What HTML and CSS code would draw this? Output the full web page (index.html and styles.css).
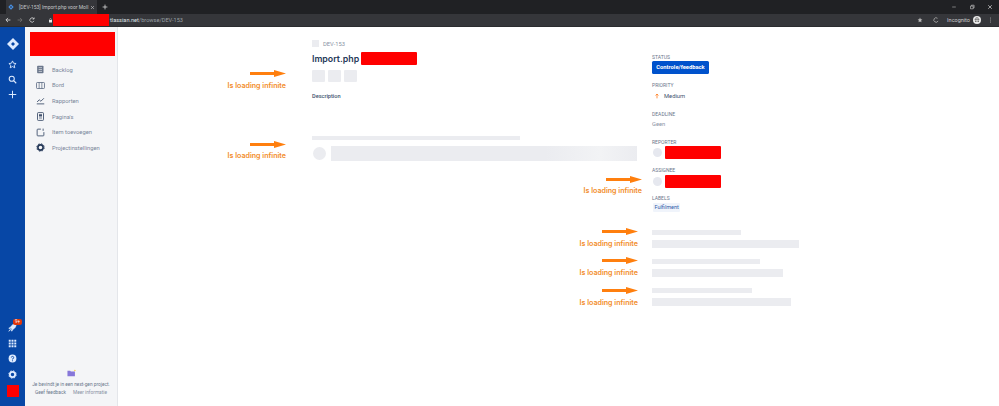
FILE: index.html
```html
<!DOCTYPE html>
<html lang="en">
<head>
  <meta charset="UTF-8" />
  <title>[DEV-153] Import.php</title>
  <link rel="stylesheet" href="styles.css">
</head>
<body>

  <!-- browser chrome -->
  <div class="tabstrip">
    <div class="tab">
      <svg class="tab-icon" viewBox="0 0 10 10"><path d="M5 0.5 9.5 5 5 9.5 0.5 5Z" fill="#4a90e2"/><path d="M5 3.5 6.5 5 5 6.5 3.5 5Z" fill="#202124"/></svg>
      <span class="tab-title">[DEV-153] Import.php voor Moll</span>
      <svg class="tab-close" viewBox="0 0 10 10"><path d="M2 2 8 8M8 2 2 8" stroke="#c8c8c8" stroke-width="1.2"/></svg>
    </div>
    <svg class="new-tab" viewBox="0 0 10 10"><path d="M5 1V9M1 5H9" stroke="#e8e8e8" stroke-width="1.2"/></svg>
    <div class="win-btns">
      <svg viewBox="0 0 10 10"><path d="M2 5H8" stroke="#bbb"/></svg>
      <svg viewBox="0 0 10 10"><path d="M2.5 3.5H7V8H2.5ZM4 3.5V2H8.5V6.5H7" fill="none" stroke="#ccc"/></svg>
      <svg viewBox="0 0 10 10"><path d="M2 2 8 8M8 2 2 8" stroke="#ddd" stroke-width="1.1"/></svg>
    </div>
  </div>
  <div class="toolbar">
    <svg class="tool" viewBox="0 0 10 10"><path d="M9 5H2M5 1.5 1.5 5 5 8.5" fill="none" stroke="#e8e8e8" stroke-width="1.3"/></svg>
    <svg class="tool" viewBox="0 0 10 10"><path d="M1 5H8M5 1.5 8.5 5 5 8.5" fill="none" stroke="#777" stroke-width="1.3"/></svg>
    <svg class="tool" viewBox="0 0 10 10"><path d="M8.3 6.5A3.6 3.6 0 1 1 8 3M8.5 0.8V3.4H5.9" fill="none" stroke="#e8e8e8" stroke-width="1.2"/></svg>
    <svg class="lock" viewBox="0 0 10 10"><rect x="2" y="4" width="6" height="5" fill="#e8e8e8"/><path d="M3.3 4V2.8A1.7 1.7 0 0 1 6.7 2.8V4" fill="none" stroke="#e8e8e8"/></svg>
    <div class="url-block"></div>
    <span class="url"><b>tlassian.net</b>/browse/DEV-153</span>
    <div class="tool-right">
      <svg class="tool" viewBox="0 0 10 10"><path d="M5 1 6.2 3.7 9 4 6.900 5.900 7.500 8.800 5 7.300 2.500 8.800 3.100 5.900 1 4 3.800 3.700Z" fill="#bbb"/></svg>
      <svg class="tool tool-ext" viewBox="0 0 10 10"><path d="M8.500 6.500A3.700 3.700 0 1 1 7.500 2.200" fill="none" stroke="#aaa" stroke-width="1.400"/></svg>
      <span class="incognito">Incognito</span>
      <svg class="avatar" viewBox="0 0 10 10"><circle cx="5" cy="5" r="5" fill="#e8e8e8"/><path d="M2 4.500H8M3.200 4.500 3.700 2.300H6.300L6.800 4.500" fill="none" stroke="#555" stroke-width=".8"/><circle cx="3.500" cy="6.500" r="1" fill="#555"/><circle cx="6.500" cy="6.500" r="1" fill="#555"/></svg>
      <svg class="dots" viewBox="0 0 4 10"><circle cx="2" cy="1.500" r=".8" fill="#ddd"/><circle cx="2" cy="5" r=".8" fill="#ddd"/><circle cx="2" cy="8.500" r=".8" fill="#ddd"/></svg>
    </div>
  </div>

  <div class="app">
    <!-- global nav -->
    <div class="rail">
      <div class="rail-top">
        <svg class="rail-logo" viewBox="0 0 12 12"><path d="M6 0 12 6 6 12 0 6Z" fill="#deebff"/><path d="M6 4 8 6 6 8 4 6Z" fill="#0747a6"/></svg>
        <svg class="rail-icon" viewBox="0 0 12 12"><path d="M6 1.200 7.400 4.300 10.800 4.700 8.300 7 9 10.400 6 8.700 3 10.400 3.700 7 1.200 4.700 4.600 4.300Z" fill="none" stroke="#deebff" stroke-width="1.200"/></svg>
        <svg class="rail-icon" viewBox="0 0 12 12"><circle cx="5" cy="5" r="3.400" fill="none" stroke="#deebff" stroke-width="1.400"/><path d="M7.500 7.500 11 11" stroke="#deebff" stroke-width="1.500"/></svg>
        <svg class="rail-icon" viewBox="0 0 12 12"><path d="M6 1V11M1 6H11" stroke="#deebff" stroke-width="1.300"/></svg>
      </div>
      <div class="rail-bottom">
        <div class="rocket">
          <svg class="rail-icon" viewBox="0 0 12 12"><path d="M11 1C7 1 4.500 3 3.300 6L6 8.700C9 7.500 11 5 11 1ZM3.300 5.500 1 7 3 8ZM6.500 8.700 5 11 4 9ZM3 8.500 1 11 3.500 9Z" fill="#deebff" stroke="#deebff" stroke-width=".8"/></svg>
          <span class="badge">9+</span>
        </div>
        <svg class="rail-icon" viewBox="0 0 12 12"><g fill="#deebff"><rect x="1" y="1" width="2.600" height="2.600"/><rect x="4.700" y="1" width="2.600" height="2.600"/><rect x="8.400" y="1" width="2.600" height="2.600"/><rect x="1" y="4.700" width="2.600" height="2.600"/><rect x="4.700" y="4.700" width="2.600" height="2.600"/><rect x="8.400" y="4.700" width="2.600" height="2.600"/><rect x="1" y="8.400" width="2.600" height="2.600"/><rect x="4.700" y="8.400" width="2.600" height="2.600"/><rect x="8.400" y="8.400" width="2.600" height="2.600"/></g></svg>
        <svg class="rail-icon" viewBox="0 0 12 12"><circle cx="6" cy="6" r="5.200" fill="#deebff"/><path d="M4.400 4.700A1.600 1.600 0 1 1 6 6.400V7.200" fill="none" stroke="#0747a6" stroke-width="1.200"/><circle cx="6" cy="9" r=".8" fill="#0747a6"/></svg>
        <svg class="rail-icon" viewBox="0 0 12 12"><circle cx="6" cy="6" r="3.500" fill="none" stroke="#deebff" stroke-width="2.400"/><circle cx="6" cy="6" r="5" fill="none" stroke="#deebff" stroke-width="1.200" stroke-dasharray="2 1.930"/></svg>
        <div class="rail-user"></div>
      </div>
    </div>

    <!-- project sidebar -->
    <div class="sidebar">
      <div class="project-block"></div>
      <ul class="side-nav">
        <li>
          <svg viewBox="0 0 12 12"><rect x="1.500" y="1" width="8.500" height="10" rx="1" fill="#6b778c"/><path d="M3.500 3.500H8M3.500 6H8M3.500 8.500H8" stroke="#f4f5f7" stroke-width=".8"/></svg>
          Backlog
        </li>
        <li>
          <svg viewBox="0 0 12 12"><rect x=".700" y="2" width="10.600" height="8" rx="1" fill="none" stroke="#5e6c84" stroke-width="1.100"/><path d="M4.200 2V10M7.800 2V10" stroke="#5e6c84"/></svg>
          Bord
        </li>
        <li>
          <svg viewBox="0 0 12 12"><path d="M1 10.500H11M1.500 8 4.300 5 6.500 7 10.500 3" fill="none" stroke="#42526e" stroke-width="1.200"/></svg>
          Rapporten
        </li>
        <li>
          <svg viewBox="0 0 12 12"><rect x="2" y=".800" width="8" height="10.400" rx="1" fill="none" stroke="#42526e" stroke-width="1.200"/><rect x="4" y="3" width="4" height="3" fill="#42526e"/><path d="M4 8H8" stroke="#42526e"/></svg>
          Pagina's
        </li>
        <li>
          <svg viewBox="0 0 12 12"><path d="M6.500 1.500H2.500A1 1 0 0 0 1.500 2.500V9.500A1 1 0 0 0 2.500 10.500H9.500A1 1 0 0 0 10.500 9.500V5.500" fill="none" stroke="#42526e" stroke-width="1.200"/><path d="M9.500 0.800V3.800" stroke="#42526e" stroke-width="1.200"/></svg>
          Item toevoegen
        </li>
        <li>
          <svg viewBox="0 0 12 12"><circle cx="6" cy="6" r="3.500" fill="none" stroke="#253858" stroke-width="2.200"/><circle cx="6" cy="6" r="5" fill="none" stroke="#253858" stroke-width="1.200" stroke-dasharray="2 1.930"/></svg>
          Projectinstellingen
        </li>
      </ul>
      <div class="side-foot">
        <svg class="folder" viewBox="0 0 10 8"><path d="M0.500 1.500H3.500L4.300 2.300H8.800V7.500H.500Z" fill="#8777d9"/><path d="M8.800 0 9.200 .9 10 1.200 9.200 1.500 8.800 2.400 8.400 1.500 7.600 1.200 8.400 .9Z" fill="#ffc400"/></svg>
        <p class="foot-text">Je bevindt je in een next-gen project.</p>
        <div class="foot-links">
          <span class="foot-dark">Geef feedback</span>
          <span>Meer informatie</span>
        </div>
      </div>
    </div>

    <!-- issue -->
    <div class="content">
      <div class="issue">
        <div class="crumb"><span class="crumb-box"></span>DEV-153</div>
        <div class="title-row">
          <h1>Import.php</h1>
          <div class="title-block"></div>
        </div>
        <div class="squares"><span></span><span></span><span></span></div>
        <h4 class="desc">Description</h4>
        <div class="skel skel-desc"></div>
        <div class="comment-row">
          <span class="skel-circle"></span>
          <div class="skel skel-comment"></div>
        </div>
      </div>

      <div class="side-panel">
        <div class="field field-status">
          <div class="label">STATUS</div>
          <div class="status-btn">Controle/feedback</div>
        </div>
        <div class="field field-priority">
          <div class="label">PRIORITY</div>
          <div class="value">
            <svg class="prio" viewBox="0 0 6 8"><path d="M3 7.500V1M.8 3.200 3 1 5.200 3.200" fill="none" stroke="#ff7a1a" stroke-width="1.200"/></svg>
            Medium
          </div>
        </div>
        <div class="field field-deadline">
          <div class="label">DEADLINE</div>
          <div class="value muted">Geen</div>
        </div>
        <div class="field field-person">
          <div class="label">REPORTER</div>
          <div class="person"><span class="person-pic"></span><div class="person-block"></div></div>
        </div>
        <div class="field field-person">
          <div class="label">ASSIGNEE</div>
          <div class="person"><span class="person-pic"></span><div class="person-block"></div></div>
        </div>
        <div class="field field-labels">
          <div class="label">LABELS</div>
          <div class="tag">Fulfilment</div>
        </div>
        <div class="skel-group">
          <div class="skel skel-short w1"></div>
          <div class="skel skel-long w2"></div>
        </div>
        <div class="skel-group">
          <div class="skel skel-short w3"></div>
          <div class="skel skel-long w4"></div>
        </div>
        <div class="skel-group">
          <div class="skel skel-short w5"></div>
          <div class="skel skel-long w6"></div>
        </div>
      </div>
    </div>
  </div>

  <!-- orange notes drawn over the screenshot -->
  <div class="note note-1"><svg viewBox="0 0 36 7"><path d="M0 2H24V0L36 3.500 24 7V5H0Z"/></svg><span>Is loading infinite</span></div>
  <div class="note note-2"><svg viewBox="0 0 36 7"><path d="M0 2H24V0L36 3.500 24 7V5H0Z"/></svg><span>Is loading infinite</span></div>
  <div class="note note-3"><svg viewBox="0 0 36 7"><path d="M0 2H24V0L36 3.500 24 7V5H0Z"/></svg><span>Is loading infinite</span></div>
  <div class="note note-4"><svg viewBox="0 0 36 7"><path d="M0 2H24V0L36 3.500 24 7V5H0Z"/></svg><span>Is loading infinite</span></div>
  <div class="note note-5"><svg viewBox="0 0 36 7"><path d="M0 2H24V0L36 3.500 24 7V5H0Z"/></svg><span>Is loading infinite</span></div>
  <div class="note note-6"><svg viewBox="0 0 36 7"><path d="M0 2H24V0L36 3.500 24 7V5H0Z"/></svg><span>Is loading infinite</span></div>

</body>
</html>
```

FILE: styles.css
```css
* {
  box-sizing: border-box;
}

html, body {
  margin: 0;
  padding: 0;
  height: 406px;
  overflow: hidden;
}

body {
  font-family: Roboto, "Liberation Sans", sans-serif;
  background: #fff;
  color: #42526e;
  position: relative;
  display: flex;
  flex-direction: column;
}

/* browser chrome */
.tabstrip {
  height: 14px;
  background: #202124;
  display: flex;
  align-items: center;
  padding-left: 6px;
  flex-shrink: 0;
}

.tab {
  width: 91px;
  height: 14px;
  background: #35363a;
  display: flex;
  align-items: center;
  padding-left: 2px;
  color: #c4c6c9;
  font-size: 5px;
  white-space: nowrap;
}

.tab-icon {
  width: 6px;
  height: 6px;
  margin-right: 5px;
  flex-shrink: 0;
}

.tab-title {
  width: 68px;
}

.tab-close {
  width: 5px;
  height: 5px;
  margin-left: 3px;
}

.new-tab {
  width: 6px;
  height: 6px;
  margin-left: 5px;
}

.win-btns {
  margin-left: auto;
  display: flex;
  gap: 12px;
  padding-right: 6px;
}

.win-btns svg {
  width: 6px;
  height: 6px;
}

.toolbar {
  height: 13px;
  background: #35363a;
  display: flex;
  align-items: center;
  padding-left: 5px;
  flex-shrink: 0;
  border-bottom: 1px solid #2b2c2f;
}

.tool {
  width: 6px;
  height: 6px;
  margin-right: 6px;
}

.lock {
  width: 5px;
  height: 5px;
  margin-left: 7px;
}

.url-block {
  width: 56px;
  height: 12px;
  background: #ff0000;
  margin-left: 0;
}

.url {
  font-size: 5.6px;
  color: #9aa0a6;
  margin-left: 1px;
}

.url b {
  font-weight: 400;
  color: #dfe1e5;
}

.tool-right {
  margin-left: auto;
  display: flex;
  align-items: center;
  padding-right: 7px;
}

.tool-right .tool {
  margin-right: 10px;
}

.tool-right .tool-ext {
  margin-right: 8px;
}

.incognito {
  color: #c9cbce;
  font-size: 5.5px;
  margin-right: 3px;
}

.avatar {
  width: 8px;
  height: 8px;
  margin-right: 8px;
}

.dots {
  width: 3px;
  height: 6px;
}

/* app frame */
.app {
  flex: 1;
  display: flex;
  min-height: 0;
}

.rail {
  width: 25px;
  background: #0747a6;
  display: flex;
  flex-direction: column;
  justify-content: space-between;
  align-items: center;
  padding: 11px 0 9px;
  flex-shrink: 0;
}

.rail-top,
.rail-bottom {
  display: flex;
  flex-direction: column;
  align-items: center;
}

.rail-logo {
  width: 12px;
  height: 12px;
  margin-bottom: 9.5px;
  display: block;
}

.rail-icon {
  width: 9px;
  height: 9px;
  display: block;
}

.rail-top .rail-icon {
  margin-bottom: 6.2px;
}

.rail-bottom .rail-icon {
  margin-bottom: 6.5px;
}

.rocket {
  position: relative;
}

.badge {
  position: absolute;
  left: 5px;
  top: -4px;
  width: 9px;
  height: 6px;
  background: #de350b;
  color: #fff;
  border-radius: 2px;
  font-size: 4.5px;
  line-height: 6px;
  text-align: center;
}

.rail-user {
  width: 12px;
  height: 12px;
  background: #ff0000;
  margin-top: 0;
}

.sidebar {
  width: 93px;
  background: #f4f5f7;
  border-right: 1px solid #e4e6ea;
  display: flex;
  flex-direction: column;
  flex-shrink: 0;
}

.project-block {
  width: 85px;
  height: 24px;
  background: #ff0000;
  margin: 5px 0 0 5px;
}

.side-nav {
  list-style-type: none;
  margin: 6px 0 0;
  padding: 0 0 0 11px;
}

.side-nav li {
  height: 15.6px;
  display: flex;
  align-items: center;
  font-size: 5.8px;
  color: #7a869a;
  white-space: nowrap;
}

.side-nav svg {
  width: 9px;
  height: 9px;
  margin-right: 7px;
}

.side-foot {
  margin-top: auto;
  text-align: center;
  font-size: 4.8px;
  color: #8993a4;
  padding-bottom: 10px;
}

.folder {
  width: 9px;
  height: 8px;
  display: block;
  margin: 0 auto 4px;
}

.foot-text {
  margin: 0 0 1.5px;
  line-height: 7px;
  white-space: nowrap;
  color: #6b778c;
}

.foot-links {
  display: flex;
  justify-content: space-between;
  padding: 0 10px;
  line-height: 7px;
  white-space: nowrap;
}

.foot-dark {
  color: #6b778c;
}

/* issue view */
.content {
  flex: 1;
  display: flex;
  padding: 13px 0 0 194px;
  min-width: 0;
}

.issue {
  width: 325px;
  flex-shrink: 0;
}

.crumb {
  display: flex;
  align-items: center;
  height: 7px;
  font-size: 5.8px;
  color: #8993a4;
}

.crumb-box {
  width: 7px;
  height: 7px;
  background: #ebecf0;
  margin-right: 4px;
}

.title-row {
  display: flex;
  align-items: center;
  margin-top: 5px;
  height: 13px;
}

h1 {
  font-family: Inter, Roboto, sans-serif;
  font-size: 8.8px;
  font-weight: 600;
  line-height: 13px;
  color: #253858;
  margin: 0;
}

.title-block {
  width: 56px;
  height: 12.5px;
  background: #ff0000;
  margin-left: 2px;
  border-radius: 1px;
}

.squares {
  display: flex;
  gap: 3px;
  margin-top: 5px;
}

.squares span {
  width: 13px;
  height: 12px;
  background: #ebecf0;
  border-radius: 1px;
}

.desc {
  font-size: 5.6px;
  font-weight: 500;
  color: #42526e;
  line-height: 7px;
  margin: 10.5px 0 0;
}

.skel {
  background: #ebecf0;
}

.skel-desc {
  width: 208px;
  height: 4.500px;
  margin-top: 36px;
}

.comment-row {
  display: flex;
  align-items: center;
  margin-top: 6px;
}

.skel-circle {
  width: 13px;
  height: 13px;
  border-radius: 50%;
  background: #ebecf0;
  margin-left: 1px;
  margin-right: 5px;
}

.skel-comment {
  flex: 1;
  height: 15px;
  background: linear-gradient(90deg, #ebecf0 70%, #f2f3f5 88%, #ebecf0 100%);
}

.side-panel {
  margin-left: 15px;
  width: 150px;
  padding-top: 14px;
}

.label {
  font-size: 5px;
  line-height: 6px;
  color: #6b778c;
}

.value {
  display: flex;
  align-items: center;
  font-size: 5.8px;
  color: #42526e;
  padding-left: 3px;
  margin-top: 5px;
  line-height: 7px;
}

.muted {
  color: #8993a4;
  padding-left: 0;
  margin-top: 4px;
}

.prio {
  width: 4px;
  height: 6px;
  margin-right: 5px;
}

.status-btn {
  width: 57px;
  height: 12.5px;
  margin-top: 1px;
  background: #0052cc;
  color: #fff;
  border-radius: 1.500px;
  font-size: 5.8px;
  font-weight: 700;
  line-height: 12.5px;
  text-align: center;
  white-space: nowrap;
}

.field-priority {
  margin-top: 8px;
}

.field-deadline {
  margin-top: 11px;
}

.field-person {
  margin-top: 11px;
}

.field-person + .field-person {
  margin-top: 8px;
}

.person {
  display: flex;
  align-items: center;
  margin-top: 1.500px;
}

.person-pic {
  width: 9px;
  height: 9px;
  border-radius: 50%;
  background: #e6e8ef;
  margin-left: 1px;
  margin-right: 3px;
}

.person-block {
  width: 56px;
  height: 13px;
  background: #ff0000;
  border-radius: 1px;
}

.field-labels {
  margin-top: 7.500px;
}

.tag {
  width: fit-content;
  margin-top: 2px;
  margin-left: 1px;
  padding: 0 1.500px;
  height: 9px;
  line-height: 9px;
  background: #f0f4fb;
  color: #2f5ba8;
  font-size: 5.500px;
  border-radius: 1px;
}

.skel-group {
  margin-bottom: 11px;
}

.skel-group:nth-of-type(7) {
  margin-top: 18px;
}

.skel-short {
  height: 4.500px;
  margin-bottom: 5.500px;
}

.skel-long {
  height: 8px;
}

.w1 { width: 89px; }
.w2 { width: 147px; }
.w3 { width: 108px; }
.w4 { width: 131px; }
.w5 { width: 100px; }
.w6 { width: 139px; }

/* annotations */
.note {
  position: absolute;
  display: flex;
  flex-direction: column;
  align-items: flex-end;
  width: 70px;
  font-family: Inter, Roboto, sans-serif;
  font-size: 7.1px;
  font-weight: 600;
  line-height: 10px;
  color: #f28c28;
  white-space: nowrap;
}

.note svg {
  width: 36px;
  height: 7px;
  fill: #ff7f0e;
  margin-bottom: 3.5px;
}

.note-1 { left: 216px; top: 70px; }
.note-2 { left: 216px; top: 140.5px; }
.note-3 { left: 572px; top: 175.5px; }
.note-4 { left: 568px; top: 228px; }
.note-5 { left: 568px; top: 257px; }
.note-6 { left: 568px; top: 287px; }
```
